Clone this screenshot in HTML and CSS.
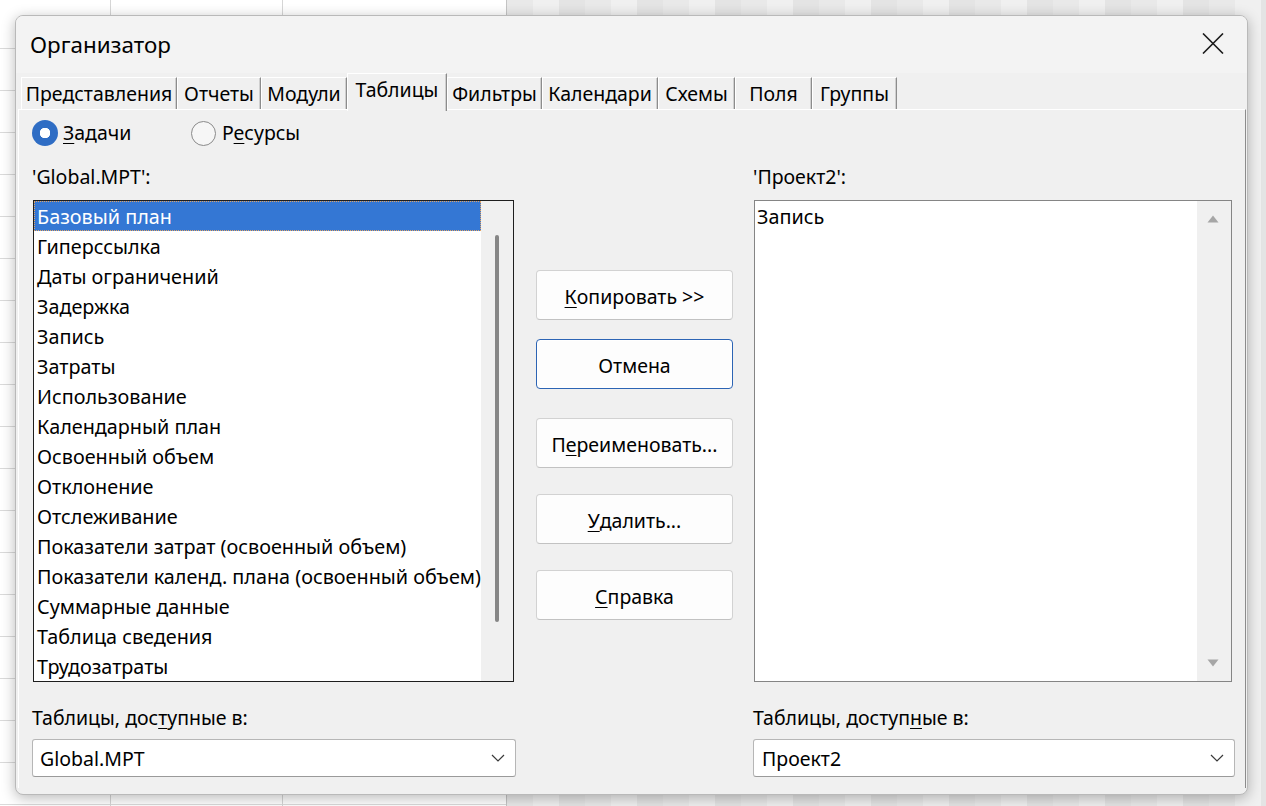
FILE: index.html
```html
<!DOCTYPE html>
<html lang="ru">
<head>
<meta charset="utf-8">
<title>Организатор</title>
<link rel="stylesheet" href="styles.css">
</head>
<body>
<div class="dialog">
  <div class="titlebar">
    <span class="title">Организатор</span>
    <svg class="close" width="22" height="21" viewBox="0 0 22 21"><path d="M1 0.5 L21 20.5 M21 0.5 L1 20.5" stroke="#1b1b1b" stroke-width="1.6" fill="none"/></svg>
  </div>
  <div class="tabs">
    <div class="tab">Представления</div>
    <div class="tab">Отчеты</div>
    <div class="tab">Модули</div>
    <div class="tab tab-active">Таблицы</div>
    <div class="tab">Фильтры</div>
    <div class="tab">Календари</div>
    <div class="tab">Схемы</div>
    <div class="tab">Поля</div>
    <div class="tab">Группы</div>
  </div>
  <div class="panel">
    <div class="radios">
      <label class="radio radio-on"><span class="dot"></span><span><u>З</u>адачи</span></label>
      <label class="radio radio-off"><span class="dot"></span><span>Р<u>е</u>сурсы</span></label>
    </div>
    <div class="grid">
      <div class="cap cap-top">'Global.MPT':</div>
      <div class="cap cap-top cap-right">'Проект2':</div>

      <div class="list list-left">
        <div class="items">
          <div class="item item-sel">Базовый план</div>
          <div class="item">Гиперссылка</div>
          <div class="item">Даты ограничений</div>
          <div class="item">Задержка</div>
          <div class="item">Запись</div>
          <div class="item">Затраты</div>
          <div class="item">Использование</div>
          <div class="item">Календарный план</div>
          <div class="item">Освоенный объем</div>
          <div class="item">Отклонение</div>
          <div class="item">Отслеживание</div>
          <div class="item">Показатели затрат (освоенный объем)</div>
          <div class="item">Показатели календ. плана (освоенный объем)</div>
          <div class="item">Суммарные данные</div>
          <div class="item">Таблица сведения</div>
          <div class="item">Трудозатраты</div>
        </div>
        <div class="vscroll"><div class="thumb"></div></div>
      </div>

      <div class="buttons">
        <div class="btn"><u>К</u>опировать &gt;&gt;</div>
        <div class="btn btn-focus">Отмена</div>
        <div class="btn btn-gap">П<u>е</u>реименовать...</div>
        <div class="btn"><u>У</u>далить...</div>
        <div class="btn"><u>С</u>правка</div>
      </div>

      <div class="list list-right">
        <div class="items">
          <div class="item item-r">Запись</div>
        </div>
        <div class="vscroll vscroll-arrows">
          <svg width="12" height="8" viewBox="0 0 12 8"><path d="M6 0.5 L11.5 7.5 L0.5 7.5 Z" fill="#a6a6a6"/></svg>
          <svg width="12" height="8" viewBox="0 0 12 8"><path d="M0.5 0.5 L11.5 0.5 L6 7.5 Z" fill="#a6a6a6"/></svg>
        </div>
      </div>

      <div class="cap cap-bottom">Таблицы, дос<u>т</u>упные в:</div>
      <div class="cap cap-bottom cap-right">Таблицы, доступ<u>н</u>ые в:</div>

      <div class="combo combo-left"><span>Global.MPT</span>
        <svg width="14" height="8" viewBox="0 0 14 8"><path d="M1 1 L7 7 L13 1" stroke="#3a3a3a" stroke-width="1.2" fill="none"/></svg>
      </div>
      <div class="combo combo-right"><span>Проект2</span>
        <svg width="14" height="8" viewBox="0 0 14 8"><path d="M1 1 L7 7 L13 1" stroke="#3a3a3a" stroke-width="1.2" fill="none"/></svg>
      </div>
    </div>
  </div>
</div>
</body>
</html>
```

FILE: styles.css
```css
* { box-sizing: border-box; }

html, body {
  margin: 0;
  width: 1266px;
  height: 806px;
  overflow: hidden;
}

body {
  font-family: "Noto Sans", "Open Sans", sans-serif;
  color: #000;
  padding: 15px 0 0 15px;
  background:
    linear-gradient(#d6d6d6, #d6d6d6) 110px 0 / 1px 100% no-repeat,
    linear-gradient(#d6d6d6, #d6d6d6) 282px 0 / 1px 100% no-repeat,
    linear-gradient(#c4c4c4, #c4c4c4) 506px 0 / 1px 100% no-repeat,
    repeating-linear-gradient(to bottom, transparent 0 41px, #dadada 41px 42px) 0 7px / 506px 100% no-repeat,
    repeating-linear-gradient(to right, #e9e9e9 0 26px, #f0f0f0 26px 52px, #e4e4e4 52px 78px) 507px 0 / 759px 100% no-repeat,
    #ffffff;
}

.dialog {
  width: 1233px;
  height: 780px;
  background: #f0f0f0;
  border: 1px solid #b9b9b9;
  border-radius: 8px;
  box-shadow: 0 3px 14px rgba(0, 0, 0, 0.28);
  overflow: hidden;
  display: flex;
  flex-direction: column;
}

.titlebar {
  height: 57px;
  flex: none;
  background: #f3f3f3;
  display: flex;
  align-items: center;
  justify-content: space-between;
  padding: 0 23px 0 14px;
}

.title {
  font-size: 22.4px;
  line-height: 28px;
  margin-top: 1px;
}

.close { display: block; margin-top: -3px; }

.tabs {
  height: 36px;
  flex: none;
  display: grid;
  grid-template-columns: 156px 84px 86px 100px 95px 116px 77px 77px 85px;
  align-items: end;
  padding-left: 5px;
  position: relative;
  z-index: 2;
}

.tab {
  height: 32px;
  font-size: 19.5px;
  line-height: 31px;
  text-align: center;
  white-space: nowrap;
  border-top: 1px solid #ffffff;
  border-left: 1px solid #ffffff;
  border-right: 1px solid #8c8c8c;
  box-shadow: inset -1px 0 0 #cfcfcf;
  background: #f0f0f0;
}

.tab-active {
  height: 38px;
  margin-bottom: -2px;
  line-height: 32px;
  border-bottom: 0;
}

.panel {
  flex: 1;
  margin: 0 1px 6px 2px;
  border-top: 1px solid #ffffff;
  border-left: 1px solid #ffffff;
  border-right: 1px solid #8c8c8c;
  padding: 0 10px 0 13px;
}

.radios {
  display: flex;
  margin-top: 10px;
  height: 26px;
}

.radio {
  display: flex;
  align-items: center;
  gap: 5px;
  font-size: 19.5px;
  line-height: 26px;
}

.radio-on { width: 159px; }
.radio-off { gap: 6px; }

.dot {
  width: 26px;
  height: 26px;
  border-radius: 50%;
  flex: none;
}

.radio-on .dot {
  background: radial-gradient(circle, #ffffff 0 5px, #2f6dc4 5.5px);
}

.radio-off .dot {
  width: 25px;
  height: 25px;
  border: 1.5px solid #8a8a8a;
  background: #f6f6f6;
}

.grid {
  display: grid;
  grid-template-columns: 484px 197px 482px;
  column-gap: 20px;
  margin-top: 20px;
}

.cap {
  font-size: 19.5px;
  line-height: 22px;
  white-space: nowrap;
}

.cap-top { grid-row: 1; grid-column: 1; }
.cap-top.cap-right { grid-column: 3; }
.cap-bottom { grid-row: 3; grid-column: 1; margin-top: 25px; }
.cap-bottom.cap-right { grid-column: 3; }

.list {
  grid-row: 2;
  margin-top: 12px;
  margin-left: 1px;
  height: 482px;
  background: #ffffff;
  display: flex;
}

.list-left {
  grid-column: 1;
  width: 481px;
  border: 1px solid #1e1e1e;
}

.list-right {
  grid-column: 3;
  width: 478px;
  border: 1px solid #858585;
}

.items {
  flex: 1;
  min-width: 0;
}

.item {
  height: 30px;
  line-height: 31px;
  font-size: 19.8px;
  padding-left: 3px;
  white-space: nowrap;
}

.item-r { padding-left: 2px; }

.item-sel {
  background: #3477d4;
  color: #ffffff;
  outline: 1px dotted #e3a463;
  outline-offset: -1px;
}

.vscroll {
  width: 32px;
  flex: none;
  background: #f0f0f0;
  padding: 34px 0 0 14px;
}

.thumb {
  width: 4px;
  height: 387px;
  border-radius: 2px;
  background: #868686;
}

.vscroll-arrows {
  width: 34px;
  padding: 14px 0 14px 10px;
  display: flex;
  flex-direction: column;
  justify-content: space-between;
}

.vscroll-arrows svg { display: block; }

.buttons {
  grid-row: 2;
  grid-column: 2;
  margin-top: 82px;
  display: flex;
  flex-direction: column;
  gap: 26px;
  align-self: start;
}

.btn {
  height: 50px;
  background: #fdfdfd;
  border: 1px solid #d2d2d2;
  border-bottom-color: #c2c2c2;
  border-radius: 4px;
  font-size: 19.5px;
  display: flex;
  align-items: center;
  justify-content: center;
  white-space: nowrap;
  padding-top: 2px;
}

.btn-focus {
  margin-top: -7px;
  border: 1px solid #2c64b4;
  box-shadow: inset 0 0 0 1px #ffffff;
}

.btn-gap { margin-top: 3px; }

.combo {
  grid-row: 4;
  margin-top: 10px;
  height: 38px;
  background: #ffffff;
  border: 1px solid #b6b6b6;
  border-bottom-color: #9a9a9a;
  border-radius: 3px;
  display: flex;
  align-items: center;
  justify-content: space-between;
  font-size: 19.5px;
  padding: 0 10px 0 7px;
}

.combo svg { display: block; }

.combo-left { grid-column: 1; width: 484px; }
.combo-right { grid-column: 3; width: 482px; padding-left: 8px; }

u { text-decoration-thickness: 1px; text-underline-offset: 3px; }
```
